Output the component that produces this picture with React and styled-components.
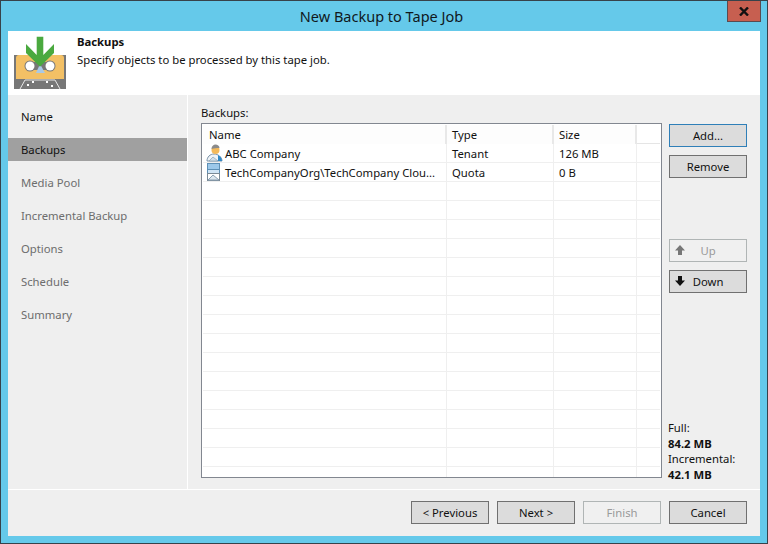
import React from "react";
import styled, { createGlobalStyle } from "styled-components";

const GlobalStyle = createGlobalStyle`
  html, body {
    margin: 0;
    padding: 0;
    background: #65c9ea;
  }
  * {
    box-sizing: border-box;
  }
`;

const Window = styled.div`
  position: relative;
  width: 768px;
  height: 544px;
  display: flex;
  flex-direction: column;
  padding: 0 7px 7px;
  background: #65c9ea;
  border: 1px solid #37424a;
  font-family: "Noto Sans", "Open Sans", sans-serif;
  font-size: 11.3px;
  color: #111;
  overflow: hidden;
`;

const TitleBar = styled.div`
  height: 30px;
  flex: none;
  padding-right: 5px;
  text-align: center;
  font-size: 14.5px;
  line-height: 30px;
  color: #10181c;
`;

const CloseButton = styled.div`
  position: absolute;
  top: -1px;
  right: 6px;
  width: 34px;
  height: 22px;
  display: flex;
  align-items: center;
  justify-content: center;
  background: #c75f50;
  border: 1px solid #5b4a50;
`;

const Client = styled.div`
  flex: 1;
  min-height: 0;
  display: flex;
  flex-direction: column;
  background: #efefef;
`;

const Header = styled.header`
  height: 64px;
  flex: none;
  display: flex;
  background: #fff;
`;

const HeaderText = styled.div`
  margin-left: 5px;
  padding-top: 2px;
  line-height: 17px;
`;

const HeaderTitle = styled.div`
  font-weight: 700;
  margin-bottom: 1px;
`;

const Main = styled.div`
  height: 395px;
  flex: none;
  display: flex;
  border-bottom: 1px solid #fff;
`;

const Sidebar = styled.nav`
  width: 180px;
  flex: none;
  display: flex;
  flex-direction: column;
  gap: 10px;
  padding-top: 10px;
  border-right: 1px solid #fff;
`;

const StepItem = styled.div`
  height: 23px;
  line-height: 23px;
  padding-left: 13px;
  background: ${(p) => (p.$active ? "#a0a0a0" : "transparent")};
  color: ${(p) => (p.$muted ? "#6d6d6d" : "#111")};
`;

const Content = styled.div`
  flex: 1;
  min-width: 0;
  display: flex;
  padding: 9px 13px 7px;
  gap: 7px;
`;

const TablePane = styled.div`
  width: 461px;
  flex: none;
  display: flex;
  flex-direction: column;
  margin-bottom: 4px;
`;

const PaneLabel = styled.div`
  height: 19px;
  line-height: 18px;
`;

const Table = styled.div`
  flex: 1;
  min-height: 0;
  padding: 1px;
  background: #fff;
  border: 1px solid #828790;
  overflow: hidden;
`;

const HeaderRow = styled.div`
  display: grid;
  grid-template-columns: 244px 107px 83px;
  height: 19px;
  border-bottom: 1px solid #e5e5e5;
`;

const HeaderCell = styled.div`
  padding-left: ${(p) => (p.$first ? "6px" : "5px")};
  line-height: 19px;
  background: #fdfdfd;
  border-right: 2px solid #e8e8e8;
`;

const Row = styled.div`
  display: grid;
  grid-template-columns: 244px 107px 83px 1fr;
  height: 19px;
  border-bottom: 1px solid #efefef;
`;

const Cell = styled.div`
  display: flex;
  align-items: center;
  gap: 1px;
  padding-left: ${(p) => (p.$name ? "3px" : "5px")};
  border-right: ${(p) => (p.$last ? "none" : "1px solid #efefef")};
  white-space: nowrap;
  overflow: hidden;
`;

const ButtonColumn = styled.div`
  flex: 1;
  display: flex;
  flex-direction: column;
  padding-top: 20px;
`;

const Button = styled.div`
  position: relative;
  width: 78px;
  height: 23px;
  flex: none;
  display: flex;
  align-items: center;
  justify-content: center;
  background: ${(p) => (p.$disabled ? "#f0f0f0" : "#dcdcdc")};
  border: 1px solid
    ${(p) => (p.$default ? "#2f7fb8" : p.$disabled ? "#b0b5b5" : "#707070")};
  color: ${(p) => (p.$disabled ? "#9a9a9a" : "#111")};
  margin-top: ${(p) => p.$gap || 0}px;
`;

const ButtonGlyph = styled.span`
  position: absolute;
  left: 4px;
  top: 4px;
  display: flex;
`;

const Stats = styled.div`
  margin-top: auto;
  margin-left: -1px;
  line-height: 15.5px;
`;

const StatValue = styled.div`
  font-weight: 700;
`;

const Footer = styled.footer`
  flex: 1;
  display: flex;
  justify-content: flex-end;
  gap: 8px;
  padding: 11px 13px 0 0;
`;

const CassetteIcon = () => (
  <svg width="64" height="64" viewBox="0 0 64 64">
    <rect x="6" y="24" width="52" height="34" fill="#777" />
    <path d="M11 24h42a3 3 0 0 1 3 3v21H8V27a3 3 0 0 1 3-3z" fill="#f3c065" />
    <rect x="22" y="31" width="20" height="8" fill="#777" />
    <path d="M28 42l4-9 5 9z" fill="#a9c9e6" />
    <circle cx="22" cy="35" r="5.500" fill="#777" />
    <circle cx="42" cy="35" r="5.500" fill="#777" />
    <circle cx="22" cy="35" r="4.500" fill="#fff" />
    <circle cx="42" cy="35" r="4.500" fill="#fff" />
    <path d="M12 58l5-9h30l5 9" fill="none" stroke="#e8e8e8" strokeWidth="1" />
    <g fill="#fff">
      <rect x="19" y="53" width="2" height="2" />
      <rect x="24" y="50" width="2" height="2" />
      <rect x="38" y="50" width="2" height="2" />
      <rect x="43" y="54" width="2" height="2" />
    </g>
    <path d="M28.700 5.700h6.600V24L46 13v9L32 35.700 18 22v-9l10.700 11z" fill="#4aa93f" />
  </svg>
);

const CloseIcon = () => (
  <svg width="10" height="9" viewBox="0 0 10 9">
    <path d="M1 0.500l8 8M9 0.500l-8 8" stroke="#111" strokeWidth="2.400" />
  </svg>
);

const TenantIcon = () => (
  <svg width="18" height="18" viewBox="0 0 18 18" style={{ flex: "none" }}>
    <path d="M1 17c0-4 3-7 7-7s8 3 8 7z" fill="#eef3f7" stroke="#7a92a8" />
    <path d="M12 11c2 1 4 3 4 6h-4z" fill="#2f88c6" />
    <path d="M3 17l4-4 5 4z" fill="#cfdde8" stroke="#8aa0b2" strokeWidth="0.700" />
    <circle cx="9.500" cy="6" r="4" fill="#f3b95a" />
    <path d="M5.500 5c0-3 2-4.500 4-4.500s4 1.500 4 3.500c-3 0-5 0-8 1z" fill="#8a8a8a" />
  </svg>
);

const QuotaIcon = () => (
  <svg width="18" height="18" viewBox="0 0 18 18" style={{ flex: "none" }}>
    <rect x="1.500" y="0.500" width="12" height="6" fill="#9cc8ea" stroke="#5d8fb5" />
    <rect x="1.500" y="6.500" width="12" height="4" fill="#cfe4f5" stroke="#5d8fb5" />
    <rect x="1.500" y="10.500" width="12" height="7" fill="#fff" stroke="#7a8a96" />
    <path d="M2 17l5-5 6 5z" fill="#dbe6ee" stroke="#8aa0b2" />
  </svg>
);

const ArrowIcon = ({ up, color }) => (
  <svg width="12" height="12" viewBox="0 0 12 12">
    <path
      d={up ? "M6 1l5 5.500H8V11H4V6.500H1z" : "M4 1h4v4.500h3L6 11 1 5.500h3z"}
      fill={color}
    />
  </svg>
);

const steps = ["Name", "Backups", "Media Pool", "Incremental Backup", "Options", "Schedule", "Summary"];

const rows = [
  { name: "ABC Company", type: "Tenant", size: "126 MB", icon: <TenantIcon /> },
  { name: "TechCompanyOrg\\TechCompany Clou...", type: "Quota", size: "0 B", icon: <QuotaIcon /> },
];

const blankRows = Array.from({ length: 16 }, (_, i) => i);

export default function App() {
  return (
    <>
      <GlobalStyle />
      <Window>
        <TitleBar>New Backup to Tape Job</TitleBar>
        <CloseButton>
          <CloseIcon />
        </CloseButton>
        <Client>
          <Header>
            <CassetteIcon />
            <HeaderText>
              <HeaderTitle>Backups</HeaderTitle>
              <div>Specify objects to be processed by this tape job.</div>
            </HeaderText>
          </Header>
          <Main>
            <Sidebar>
              {steps.map((step, i) => (
                <StepItem key={step} $active={i === 1} $muted={i > 1}>
                  {step}
                </StepItem>
              ))}
            </Sidebar>
            <Content>
              <TablePane>
                <PaneLabel>Backups:</PaneLabel>
                <Table>
                  <HeaderRow>
                    <HeaderCell $first>Name</HeaderCell>
                    <HeaderCell>Type</HeaderCell>
                    <HeaderCell>Size</HeaderCell>
                  </HeaderRow>
                  {rows.map((row) => (
                    <Row key={row.name}>
                      <Cell $name>
                        {row.icon}
                        {row.name}
                      </Cell>
                      <Cell>{row.type}</Cell>
                      <Cell>{row.size}</Cell>
                      <Cell $last />
                    </Row>
                  ))}
                  {blankRows.map((i) => (
                    <Row key={i}>
                      <Cell />
                      <Cell />
                      <Cell />
                      <Cell $last />
                    </Row>
                  ))}
                </Table>
              </TablePane>
              <ButtonColumn>
                <Button $default>Add...</Button>
                <Button $gap={8}>Remove</Button>
                <Button $gap={61} $disabled>
                  <ButtonGlyph>
                    <ArrowIcon up color="#777" />
                  </ButtonGlyph>
                  Up
                </Button>
                <Button $gap={8}>
                  <ButtonGlyph>
                    <ArrowIcon color="#111" />
                  </ButtonGlyph>
                  Down
                </Button>
                <Stats>
                  <div>Full:</div>
                  <StatValue>84.2 MB</StatValue>
                  <div>Incremental:</div>
                  <StatValue>42.1 MB</StatValue>
                </Stats>
              </ButtonColumn>
            </Content>
          </Main>
          <Footer>
            <Button>&lt; Previous</Button>
            <Button>Next &gt;</Button>
            <Button $disabled>Finish</Button>
            <Button>Cancel</Button>
          </Footer>
        </Client>
      </Window>
    </>
  );
}
